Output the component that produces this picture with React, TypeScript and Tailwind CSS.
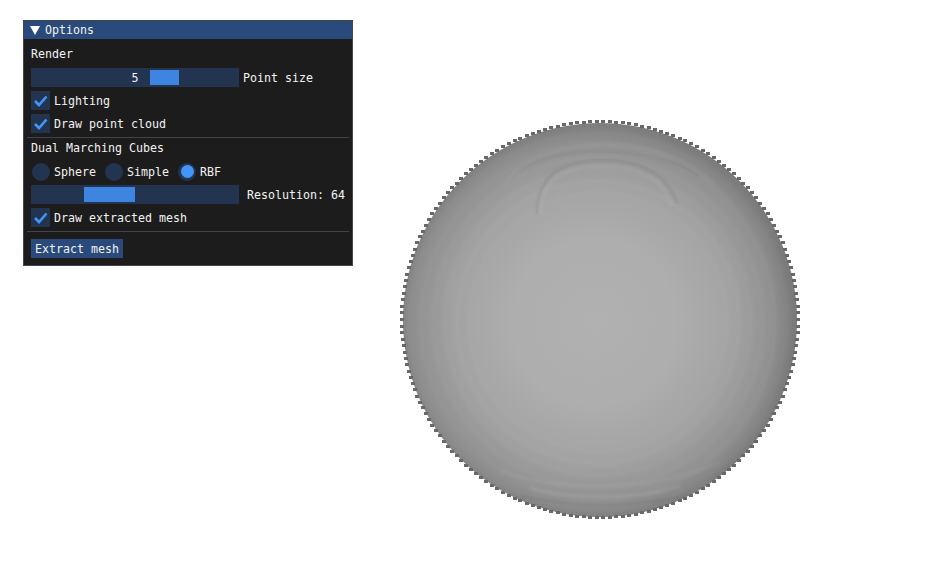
const bands = Array.from({ length: 12 }, (_, i) => 195 - i * 6)

// jagged rim of the point cloud, snapped to whole pixels
const teeth = Array.from({ length: 190 }, (_, i) => {
    const a = (i / 190) * Math.PI * 2
    return { x: Math.round(600 + 198 * Math.cos(a)), y: Math.round(320 + 198 * Math.sin(a)) }
})

const Check = () => (
    <svg width="19" height="19" viewBox="0 0 19 19" className="block">
        <path d="M4 10 L8 14 L15.5 5.5" fill="none" stroke="#4296fa" strokeWidth="2.6" />
    </svg>
)

const CheckRow = ({ label }: { label: string }) => (
    <div className="flex h-[19px] items-center gap-[4px]">
        <div className="h-[19px] w-[19px] bg-[#233450]"><Check /></div>
        <span className="pt-px">{label}</span>
    </div>
)

const Radio = ({ label, active, width }: { label: string; active?: boolean; width: number }) => (
    <div className="flex h-[19px] items-center" style={{ width }}>
        <div className="ml-px flex h-[18px] w-[18px] items-center justify-center rounded-full bg-[#233450]">
            {active && <div className="h-[13px] w-[13px] rounded-full bg-[#4296fa]" />}
        </div>
        <span className="ml-[4px] pt-px">{label}</span>
    </div>
)

const Slider = ({ left, width, value }: { left: string; width: string; value?: string }) => (
    <div className="relative flex h-[19px] w-[208px] items-center justify-center bg-[#233450]">
        <div className={`absolute top-[2px] h-[15px] bg-[#3d85e0] ${left} ${width}`} />
        {value && <span className="relative pt-px">{value}</span>}
    </div>
)

const Sphere = () => (
    <svg width="937" height="587" viewBox="0 0 937 587" className="block">
        <defs>
            <radialGradient id="shade" gradientUnits="userSpaceOnUse" cx="594" cy="322" r="201">
                <stop offset="0" stopColor="#b1b1b1" />
                <stop offset="0.4" stopColor="#aeaeae" />
                <stop offset="0.7" stopColor="#a3a3a3" />
                <stop offset="0.9" stopColor="#909090" />
                <stop offset="1" stopColor="#7a7a7a" />
            </radialGradient>
            <clipPath id="ball"><circle cx="600" cy="320" r="197" /></clipPath>
            <filter id="soft"><feGaussianBlur stdDeviation="1" /></filter>
        </defs>
        <circle cx="600" cy="320" r="197" fill="url(#shade)" />
        <g clipPath="url(#ball)" fill="none" filter="url(#soft)">
            {bands.map((r, i) => (
                <circle key={r} cx="598" cy="322" r={r} stroke={i % 2 ? "#ffffff" : "#000000"} strokeOpacity="0.012" strokeWidth="3" />
            ))}
            <path d="M541 214 C541 176 568 166 604 166 C640 166 664 180 672 206" stroke="#ffffff" strokeOpacity="0.05" strokeWidth="3" />
            <path d="M537 214 C537 172 566 160 604 160 C642 160 668 176 677 204" stroke="#000000" strokeOpacity="0.05" strokeWidth="4" />
            <path d="M520 170 C550 146 650 142 700 176" stroke="#000000" strokeOpacity="0.03" strokeWidth="4" />
            <path d="M505 182 C545 132 665 130 715 186" stroke="#ffffff" strokeOpacity="0.03" strokeWidth="3" />
            <path d="M500 470 C550 492 650 494 720 462" stroke="#ffffff" strokeOpacity="0.04" strokeWidth="4" />
            <path d="M530 488 C570 500 640 500 680 486" stroke="#ffffff" strokeOpacity="0.07" strokeWidth="3" />
            <path d="M520 496 C570 508 640 508 690 494" stroke="#000000" strokeOpacity="0.04" strokeWidth="3" />
        </g>
        <g fill="#686868" shapeRendering="crispEdges">
            {teeth.map((t, i) => (
                <rect key={i} x={t.x - 2} y={t.y - 2} width="4" height="3" />
            ))}
        </g>
    </svg>
)

const App = () => {
    return (
        <div className="relative h-[587px] w-[937px] overflow-hidden bg-white">
            <Sphere />
            <div
                className="absolute left-[23px] top-[20px] w-[330px] border border-[#43434c] bg-[#1c1c1c] text-[#f2f2f2]"
                style={{ fontFamily: '"DejaVu Sans Mono", monospace', fontSize: "11.63px", lineHeight: "13px" }}
            >
                <div className="flex h-[18px] items-center bg-[#294a7a]">
                    <svg width="10" height="9" viewBox="0 0 10 9" className="ml-[6px]">
                        <path d="M0 0 H10 L5 9 Z" fill="#ffffff" />
                    </svg>
                    <span className="ml-[5px] pt-px">Options</span>
                </div>
                <div className="flex flex-col gap-[4px] px-[7px] pb-[7px] pt-[6px]">
                    <div className="flex h-[19px] items-center">Render</div>
                    <div className="flex h-[19px] items-center gap-[4px]">
                        <Slider left="left-[119px]" width="w-[29px]" value="5" />
                        <span className="pt-px">Point size</span>
                    </div>
                    <CheckRow label="Lighting" />
                    <CheckRow label="Draw point cloud" />
                    <div className="-mx-[4px] h-px bg-[#43434c]" />
                    <div className="mb-[3px] h-[13px]">Dual Marching Cubes</div>
                    <div className="flex h-[19px] items-center">
                        <Radio label="Sphere" width={73} />
                        <Radio label="Simple" width={73} />
                        <Radio label="RBF" active width={60} />
                    </div>
                    <div className="flex h-[19px] items-center gap-[8px]">
                        <Slider left="left-[53px]" width="w-[51px]" />
                        <span className="pt-px">Resolution: 64</span>
                    </div>
                    <CheckRow label="Draw extracted mesh" />
                    <div className="-mx-[4px] h-px bg-[#43434c]" />
                    <div className="mt-[3px] flex h-[19px] w-[92px] items-center justify-center bg-[#294a7a] pt-px">Extract mesh</div>
                </div>
            </div>
        </div>
    )
}

export default App
